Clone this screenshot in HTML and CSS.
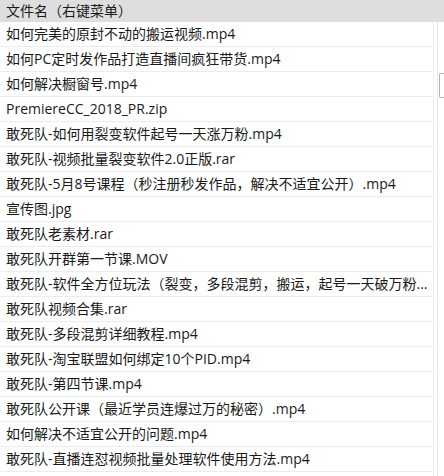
FILE: index.html
```html
<!DOCTYPE html>
<html lang="zh-CN">
<head>
    <meta charset="UTF-8">
    <title>文件列表</title>
    <link rel="stylesheet" href="styles.css">
</head>
<body>
    <div class="file-table">
        <div class="table-main">
            <div class="header">文件名（右键菜单）</div>
            <ul class="file-list">
                <li>如何完美的原封不动的搬运视频.mp4</li>
                <li>如何PC定时发作品打造直播间疯狂带货.mp4</li>
                <li>如何解决橱窗号.mp4</li>
                <li>PremiereCC_2018_PR.zip</li>
                <li>敢死队-如何用裂变软件起号一天涨万粉.mp4</li>
                <li>敢死队-视频批量裂变软件2.0正版.rar</li>
                <li>敢死队-5月8号课程（秒注册秒发作品，解决不适宜公开）.mp4</li>
                <li>宣传图.jpg</li>
                <li>敢死队老素材.rar</li>
                <li>敢死队开群第一节课.MOV</li>
                <li>敢死队-软件全方位玩法（裂变，多段混剪，搬运，起号一天破万粉...</li>
                <li>敢死队视频合集.rar</li>
                <li>敢死队-多段混剪详细教程.mp4</li>
                <li>敢死队-淘宝联盟如何绑定10个PID.mp4</li>
                <li>敢死队-第四节课.mp4</li>
                <li>敢死队公开课（最近学员连爆过万的秘密）.mp4</li>
                <li>如何解决不适宜公开的问题.mp4</li>
                <li>敢死队-直播连怼视频批量处理软件使用方法.mp4</li>
            </ul>
        </div>
        <div class="edge">
            <div class="edge-head"></div>
            <div class="edge-box"></div>
        </div>
    </div>
</body>
</html>
```

FILE: styles.css
```css
body {
    margin: 0;
    background: #fff;
    font-family: "Open Sans", "Noto Sans CJK SC", sans-serif;
    color: #1a1a1a;
    overflow: hidden;
}

.file-table {
    display: flex;
    width: 444px;
    height: 476px;
}

.table-main {
    width: 433px;
    border-right: 1px solid #f2f2f2;
}

.header {
    height: 22px;
    line-height: 22px;
    padding-left: 6px;
    font-size: 14px;
    background-color: #dedede;
    white-space: nowrap;
}

.file-list {
    list-style: none;
    margin: 0;
    padding: 0;
}

.file-list li {
    height: 24px;
    line-height: 24px;
    padding: 0 0 0 6px;
    font-size: 14px;
    border-bottom: 1px solid #ececec;
    white-space: nowrap;
    overflow: hidden;
}

.edge {
    flex: 1;
    display: flex;
    flex-direction: column;
    margin-left: 3px;
    border-left: 1px solid #e6e6e6;
}

.edge-head {
    height: 22px;
    background-color: #dedede;
    margin-left: -5px;
}

.edge-box {
    margin-top: 51px;
    margin-left: 1px;
    height: 23px;
    border: 1px solid #b4b4b4;
    border-right: none;
    border-radius: 2px 0 0 2px;
}
```
